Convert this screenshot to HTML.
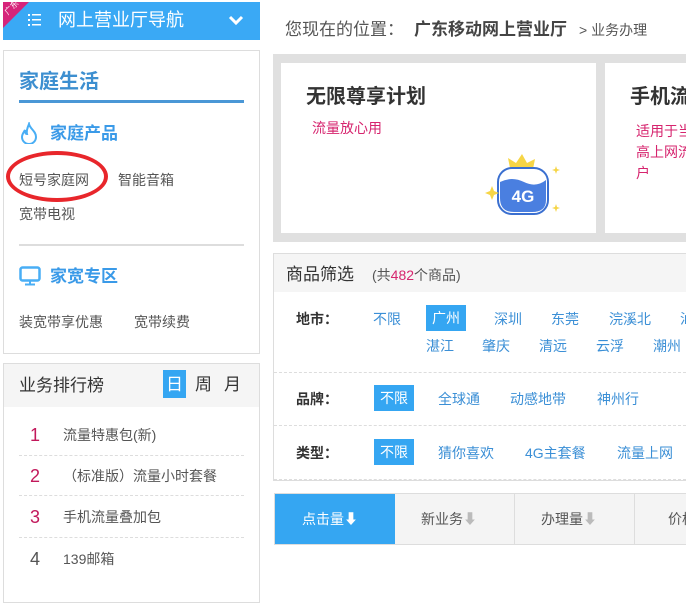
<!DOCTYPE html><html><head><meta charset="utf-8"><style>
*{margin:0;padding:0;box-sizing:border-box}
body{width:686px;height:597px;overflow:hidden;background:#fff;font-family:"Liberation Sans","Noto Sans CJK SC",sans-serif;position:relative;color:#555}
.a{position:absolute;white-space:nowrap;line-height:1}
.lk{font-size:14px;color:#555}
.op{font-size:14px;color:#3b8fd6}
.sel{background:#35a6f2;color:#fff;padding:6px 6px;}
.lab{font-size:14px;color:#333;font-weight:bold}
.dash{position:absolute;height:0;border-top:1px dashed #ddd}
.num{font-size:18px;color:#c2185b}
</style></head><body>
<!-- header -->
<div class="a" style="left:3px;top:2px;width:257px;height:38px;background:#3aa9f5"></div>
<div class="a" style="left:3px;top:2px;width:0;height:0;border-top:26px solid #d6247a;border-right:26px solid transparent"></div>
<div class="a" style="left:4px;top:4px;font-size:8px;color:#fff;transform:rotate(-45deg)">广东</div>
<svg class="a" style="left:28px;top:13px" width="14" height="14"><g fill="#fff"><rect x="0" y="1" width="2" height="2"/><rect x="0" y="6" width="2" height="2"/><rect x="0" y="11" width="2" height="2"/><rect x="4" y="1" width="9" height="1.5"/><rect x="4" y="6" width="9" height="1.5"/><rect x="4" y="11" width="9" height="1.5"/></g></svg>
<div class="a" style="left:58px;top:11px;color:#fff;font-size:18px">网上营业厅导航</div>
<svg class="a" style="left:228px;top:15px" width="16" height="10"><path d="M2 2l6 6 6-6" stroke="#fff" stroke-width="3" fill="none"/></svg>
<!-- panel 1 -->
<div class="a" style="left:3px;top:50px;width:257px;height:304px;border:1px solid #ddd"></div>
<div class="a" style="left:19px;top:72px;font-size:20px;font-weight:bold;color:#3d8fd0">家庭生活</div>
<div class="a" style="left:19px;top:100px;width:225px;height:3px;background:#4a97d6"></div>
<svg class="a" style="left:19px;top:122px" width="20" height="22"><path d="M10 2c1 5 7 7 7 13a7 7 0 0 1-14 0c0-3 2-5 3-7 0 3 1 4 2 4-1-4 1-7 2-10z" stroke="#49aef5" stroke-width="2" fill="none"/></svg>
<div class="a" style="left:50px;top:125px;font-size:17px;font-weight:bold;color:#3a9ae8">家庭产品</div>
<div class="a lk" style="left:19px;top:173px">短号家庭网</div>
<div class="a lk" style="left:118px;top:173px">智能音箱</div>
<div class="a lk" style="left:19px;top:207px">宽带电视</div>
<div class="a" style="left:6px;top:151px;width:102px;height:51px;border:4px solid #e8262b;border-radius:50%"></div>
<div class="a" style="left:19px;top:244px;width:225px;height:2px;background:#ddd"></div>
<svg class="a" style="left:19px;top:266px" width="22" height="20"><rect x="1.5" y="1.5" width="19" height="13" rx="2" stroke="#49aef5" stroke-width="2.5" fill="none"/><path d="M11 15v3M6 18.5h10" stroke="#49aef5" stroke-width="2"/></svg>
<div class="a" style="left:50px;top:268px;font-size:17px;font-weight:bold;color:#3a9ae8">家宽专区</div>
<div class="a lk" style="left:19px;top:315px">装宽带享优惠</div>
<div class="a lk" style="left:134px;top:315px">宽带续费</div>
<!-- panel 2 -->
<div class="a" style="left:3px;top:363px;width:257px;height:240px;border:1px solid #ddd"></div>
<div class="a" style="left:4px;top:364px;width:255px;height:43px;background:#f5f5f5"></div>
<div class="a" style="left:19px;top:377px;font-size:17px;color:#333">业务排行榜</div>
<div class="a" style="left:163px;top:370px;width:23px;height:28px;background:#35a6f2"></div>
<div class="a" style="left:166px;top:376px;font-size:17px;color:#fff">日</div>
<div class="a" style="left:195px;top:376px;font-size:17px;color:#333">周</div>
<div class="a" style="left:224px;top:376px;font-size:17px;color:#333">月</div>
<div class="a num" style="left:30px;top:426px">1</div><div class="a lk" style="left:63px;top:428px">流量特惠包(新)</div>
<div class="dash" style="left:19px;top:455px;width:225px"></div>
<div class="a num" style="left:30px;top:467px">2</div><div class="a lk" style="left:63px;top:469px">（标准版）流量小时套餐</div>
<div class="dash" style="left:19px;top:495px;width:225px"></div>
<div class="a num" style="left:30px;top:508px">3</div><div class="a lk" style="left:63px;top:510px">手机流量叠加包</div>
<div class="dash" style="left:19px;top:537px;width:225px"></div>
<div class="a num" style="left:30px;top:550px;color:#555">4</div><div class="a lk" style="left:63px;top:552px">139邮箱</div>
<!-- breadcrumb -->
<div class="a" style="left:285px;top:21px;font-size:17px;color:#555">您现在的位置：</div>
<div class="a" style="left:414px;top:21px;font-size:17px;font-weight:bold;color:#444">广东移动网上营业厅</div>
<div class="a" style="left:579px;top:23px;font-size:14px;color:#555">&gt; 业务办理</div>
<!-- cards -->
<div class="a" style="left:273px;top:54px;width:413px;height:188px;background:#e0e0e0"></div>
<div class="a" style="left:281px;top:63px;width:315px;height:170px;background:#fff"></div>
<div class="a" style="left:605px;top:63px;width:81px;height:170px;background:#fff"></div>
<div class="a" style="left:306px;top:87px;font-size:20px;font-weight:bold;color:#333">无限尊享计划</div>
<div class="a" style="left:312px;top:121px;font-size:14px;color:#d6246e">流量放心用</div>
<div class="a" style="left:630px;top:87px;font-size:20px;font-weight:bold;color:#333">手机流</div>
<div class="a" style="left:636px;top:121px;font-size:14px;color:#d6246e;line-height:21px;white-space:normal;width:60px">适用于当高上网流户</div>
<svg class="a" style="left:484px;top:146px" width="80" height="74"><path d="M26 22l-2-10 8 5 6-9 5 9 8-4-2 10z" fill="#f6d546"/><rect x="14" y="22" width="50" height="46" rx="14" fill="#fff" stroke="#3a6fd0" stroke-width="2"/><path d="M16 36q12-6 24 0t22-2v20q0 12-14 12h-18q-14 0-14-14z" fill="#4a7fe0"/><text x="39" y="56" text-anchor="middle" font-family="Liberation Sans" font-weight="bold" font-size="17" fill="#fff">4G</text><path d="M8 40l2 5 5 2-5 2-2 5-2-5-5-2 5-2z" fill="#f6d546"/><path d="M72 20l1 3 3 1-3 1-1 3-1-3-3-1 3-1z" fill="#f6d546"/><path d="M72 58l1 3 3 1-3 1-1 3-1-3-3-1 3-1z" fill="#f6d546"/></svg>
<!-- filter -->
<div class="a" style="left:273px;top:253px;width:420px;height:228px;border:1px solid #ddd"></div>
<div class="a" style="left:274px;top:254px;width:412px;height:38px;background:#f5f5f5"></div>
<div class="a" style="left:286px;top:266px;font-size:17px;color:#333">商品筛选</div>
<div class="a" style="left:372px;top:268px;font-size:14px;color:#555">(共<span style="color:#d6246e">482</span>个商品)</div>
<div class="a lab" style="left:296px;top:312px">地市：</div>
<div class="a op" style="left:373px;top:312px">不限</div>
<div class="a op sel" style="left:426px;top:305px">广州</div>
<div class="a op" style="left:494px;top:312px">深圳</div>
<div class="a op" style="left:551px;top:312px">东莞</div>
<div class="a op" style="left:609px;top:312px">浣溪北</div>
<div class="a op" style="left:680px;top:312px">汕</div>
<div class="a op" style="left:426px;top:339px">湛江</div>
<div class="a op" style="left:482px;top:339px">肇庆</div>
<div class="a op" style="left:539px;top:339px">清远</div>
<div class="a op" style="left:596px;top:339px">云浮</div>
<div class="a op" style="left:653px;top:339px">潮州</div>
<div class="dash" style="left:274px;top:372px;width:412px"></div>
<div class="a lab" style="left:296px;top:392px">品牌：</div>
<div class="a op sel" style="left:374px;top:385px">不限</div>
<div class="a op" style="left:438px;top:392px">全球通</div>
<div class="a op" style="left:510px;top:392px">动感地带</div>
<div class="a op" style="left:597px;top:392px">神州行</div>
<div class="dash" style="left:274px;top:425px;width:412px"></div>
<div class="a lab" style="left:296px;top:446px">类型：</div>
<div class="a op sel" style="left:374px;top:439px">不限</div>
<div class="a op" style="left:438px;top:446px">猜你喜欢</div>
<div class="a op" style="left:525px;top:446px">4G主套餐</div>
<div class="a op" style="left:617px;top:446px">流量上网</div>
<div class="dash" style="left:274px;top:479px;width:412px"></div>
<!-- sort -->
<div class="a" style="left:274px;top:493px;width:420px;height:52px;background:#f4f4f4;border:1px solid #ddd"></div>
<div class="a" style="left:275px;top:494px;width:120px;height:50px;background:#35a6f2"></div>
<div class="a" style="left:514px;top:494px;width:1px;height:50px;background:#ddd"></div>
<div class="a" style="left:634px;top:494px;width:1px;height:50px;background:#ddd"></div>
<div class="a" style="left:302px;top:512px;font-size:14px;color:#fff">点击量<b>⬇</b></div>
<div class="a" style="left:421px;top:512px;font-size:14px;color:#555">新业务<span style="color:#bbb">⬇</span></div>
<div class="a" style="left:541px;top:512px;font-size:14px;color:#555">办理量<span style="color:#bbb">⬇</span></div>
<div class="a" style="left:668px;top:512px;font-size:14px;color:#555">价格</div>
</body></html>
